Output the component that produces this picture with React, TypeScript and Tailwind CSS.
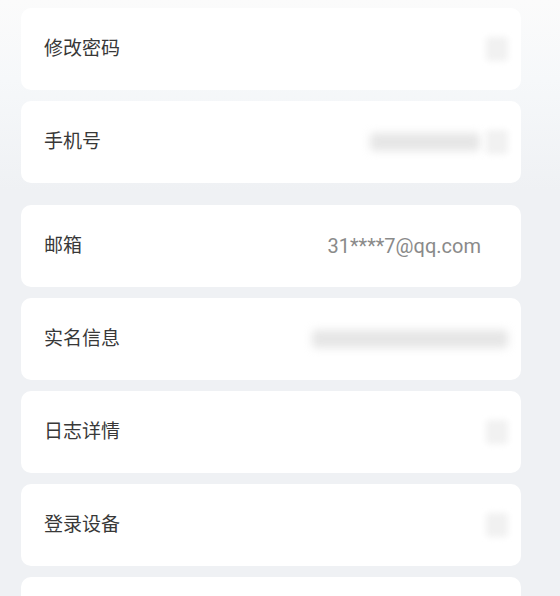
import { ReactNode } from 'react';

const fontStack = "font-['Roboto','Noto_Sans_CJK_SC',sans-serif]";

// blurred placeholders for hidden values
const BlurBox = () => (
  <div className="h-[24px] w-[22px] rounded-[4px] bg-[#f1f1f1] blur-[3px]" />
);

const BlurText = ({ width }: { width: number }) => (
  <div className="flex h-[24px] items-center blur-[4px]" style={{ width }}>
    <div className="h-[18px] w-full rounded-sm bg-[#dcdcdc] opacity-70" />
  </div>
);

const Row = ({ label, right }: { label: string; right?: ReactNode }) => (
  <div className="flex h-[82px] items-center justify-between rounded-[10px] bg-white pl-[23px] pr-[13px]">
    <span className="text-[19px] text-[#383838]">{label}</span>
    <div className="flex items-center gap-[6px]">{right}</div>
  </div>
);

const App = () => {
  return (
    <div
      className={`${fontStack} min-h-[596px] w-[560px] overflow-hidden bg-[linear-gradient(180deg,#fbfbfb_0px,#f6f8fa_80px,#eff1f4_190px)] pl-[21px] pt-[8px]`}
    >
      <div className="flex w-[500px] flex-col gap-[11px]">
        <Row label="修改密码" right={<BlurBox />} />
        <Row
          label="手机号"
          right={
            <>
              <BlurText width={110} />
              <BlurBox />
            </>
          }
        />
      </div>

      <div className="mt-[22px] flex w-[500px] flex-col gap-[11px]">
        <Row
          label="邮箱"
          right={<span className="pr-[27px] text-[20px] text-[#8a8a8a]">31****7@qq.com</span>}
        />
        <Row label="实名信息" right={<BlurText width={196} />} />
        <Row label="日志详情" right={<BlurBox />} />
        <Row label="登录设备" right={<BlurBox />} />
        <Row label="" />
      </div>
    </div>
  );
};

export default App;
